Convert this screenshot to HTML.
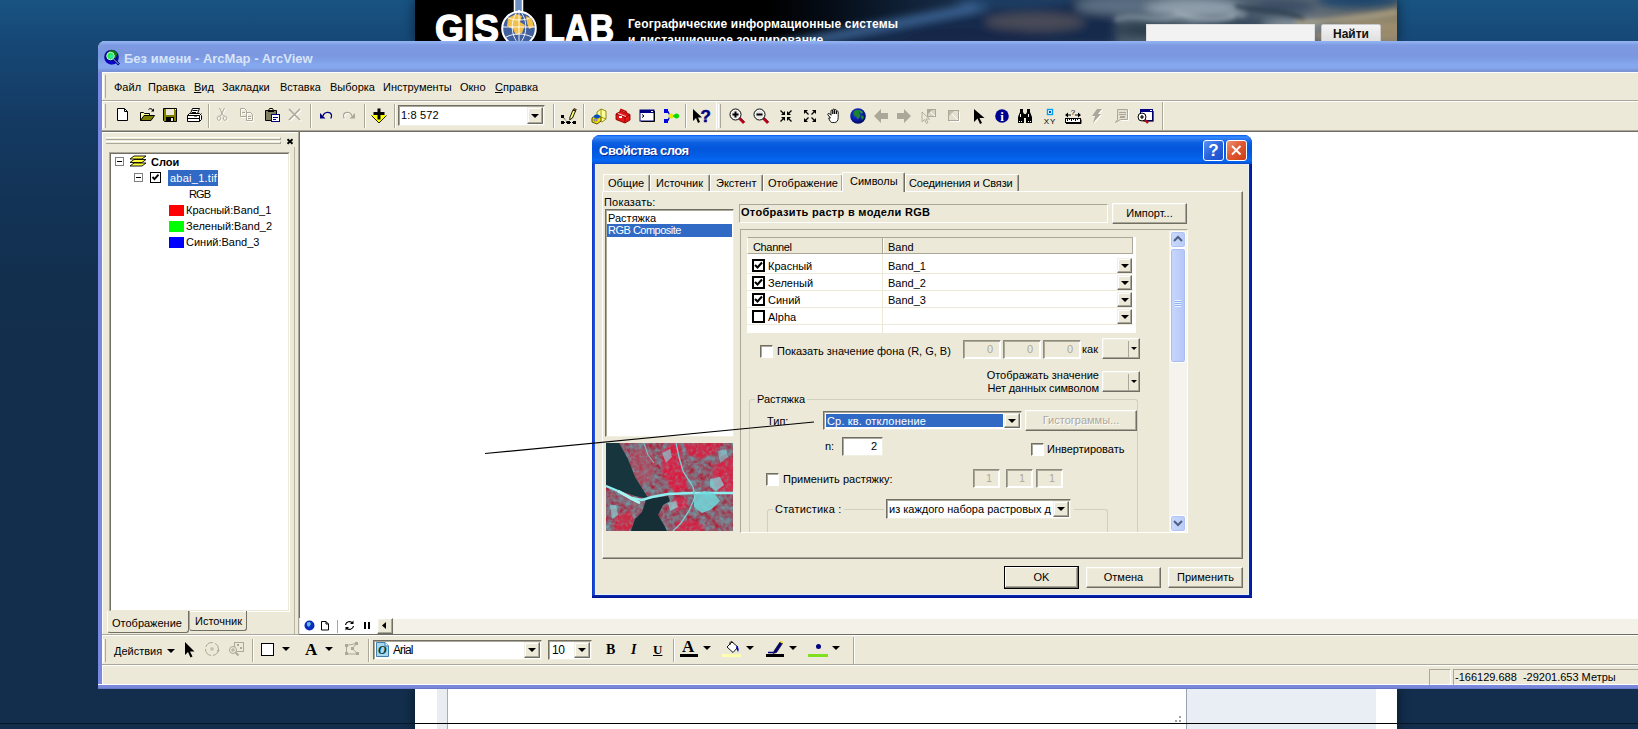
<!DOCTYPE html>
<html lang="ru">
<head>
<meta charset="utf-8">
<title>Свойства слоя</title>
<style>
*{box-sizing:border-box;margin:0;padding:0}
html,body{width:1638px;height:729px;overflow:hidden}
body{position:relative;font-family:"Liberation Sans",sans-serif;font-size:11px;color:#000;
 background:linear-gradient(180deg,#185482 0px,#164876 40px,#143a62 120px,#133356 200px,#122f4e 280px,#122e4c 360px,#122e4c 729px)}
.abs{position:absolute}
.t{position:absolute;white-space:nowrap;line-height:13px;height:13px}
.face{background:#ece9d8}
/* ---------- site header ---------- */
#site{left:415px;top:0;width:982px;height:41px;background:#000;overflow:hidden;box-shadow:0 0 10px 2px rgba(0,0,0,.4)}
#sitebot{left:415px;top:689px;width:982px;height:41px;background:#fff;overflow:hidden;box-shadow:0 0 10px 2px rgba(0,0,0,.4)}
/* ---------- main window ---------- */
#win{left:98px;top:41px;width:1560px;height:648px;background:#ece9d8;border-radius:7px 0 0 0;overflow:hidden}
#wtitle{left:0;top:0;width:1560px;height:31px;background:linear-gradient(180deg,#93b3f2 0,#8cabee 2px,#7d9ae2 4px,#7a97e0 14px,#7f9ee6 19px,#85a7ee 23px,#85a7ee 27px,#7c97dc 29px,#7a90d2 31px)}
#wtitle .cap{left:26px;top:10px;font-weight:bold;font-size:13px;line-height:16px;height:16px;color:#d8e4f8;}
#wl{left:0;top:31px;width:5px;height:617px;background:linear-gradient(90deg,#7a88de 0,#7a88de 4px,#fff 4px)}
#wb{left:0;top:643px;width:1560px;height:5px;background:linear-gradient(180deg,#fff 0,#fff 1px,#7a88de 1px,#7886d8 4px,#5a68b8 5px)}
.sep{position:absolute;width:2px;border-left:1px solid #aca899;border-right:1px solid #fff}
.hline{position:absolute;height:2px;border-top:1px solid #aca899;border-bottom:1px solid #fff}
.grip{position:absolute;width:3px;border-left:1px solid #fff;border-right:1px solid #aca899}
.ico{position:absolute;overflow:visible}
/* classic controls */
.sunken{position:absolute;border:1px solid;border-color:#aca899 #fff #fff #aca899;background:#fff}
.sunken2{position:absolute;border:1px solid;border-color:#716f64 #f1efe2 #f1efe2 #716f64;box-shadow:inset 1px 1px 0 #aca899, inset -1px -1px 0 #fff;background:#fff}
.btn{position:absolute;background:#ece9d8;border:1px solid;border-color:#fff #716f64 #716f64 #fff;box-shadow:inset -1px -1px 0 #aca899, inset 1px 1px 0 #f1efe2;text-align:center;line-height:18px}
.ddb{position:absolute;background:#ece9d8;border:1px solid;border-color:#f1efe2 #716f64 #716f64 #f1efe2;box-shadow:inset -1px -1px 0 #aca899, inset 1px 1px 0 #fff}
.ddb:after{content:"";position:absolute;left:50%;top:50%;margin:-2px 0 0 -4px;border:4px solid transparent;border-top:4px solid #000;border-bottom:0}
.chk{position:absolute;width:13px;height:13px;background:#fff;border:1px solid;border-color:#716f64 #fff #fff #716f64;box-shadow:inset 1px 1px 0 #aca899}
.dis{color:#aca899}

/* dialog */
#dlg{background:linear-gradient(90deg,#0c34c0 0,#2458dc 3px,#1540c8 50%,#0c2cb0 657px,#001494 660px);border-radius:8px 8px 0 0;overflow:hidden}
#dtitle{left:0;top:0;width:660px;height:29px;background:linear-gradient(180deg,#0058ee 0,#3a8cfc 2px,#2a78f0 4px,#0a5fe0 8px,#0356dc 14px,#0460e8 22px,#0668f4 25px,#0558e0 28px,#0447c8 29px)}
#dtitle .dcap{left:7px;top:8px;font-weight:bold;font-size:13px;line-height:16px;height:16px;color:#fff;text-shadow:1px 1px 0 #0a2a90;letter-spacing:-.5px}
.tb{top:5px;width:21px;height:21px;border:1px solid #fff;border-radius:3px;color:#fff;text-align:center}
.tbh{left:611px;background:linear-gradient(135deg,#5a92f4,#2a62dc 50%,#1c4ccc);font:bold 17px/19px "Liberation Sans",sans-serif}
.tbx{left:634px;background:linear-gradient(135deg,#ec9478,#e05a34 45%,#cc3c12)}
.tbx svg{position:absolute;left:-1px;top:-1px}
#dbody{left:3px;top:29px;width:654px;height:431px;background:#ece9d8;border:1px solid #e6f2fc;border-top:0}
#dbot{left:0;top:460px;width:660px;height:3px;background:linear-gradient(180deg,#0c2cb0,#00108c)}
#dlg .btn{font-size:11px}
</style>
</head>
<body>
<!--SITE-->
<div id="site" class="abs">
<svg class="abs" style="left:0;top:0" width="982" height="41" viewBox="0 0 982 41">
<defs>
<linearGradient id="hg" x1="0" x2="1" y1="0" y2="0">
<stop offset="0" stop-color="#000"/><stop offset=".36" stop-color="#000"/><stop offset=".42" stop-color="#050c16"/><stop offset=".50" stop-color="#0f2036"/><stop offset=".58" stop-color="#1c3350"/><stop offset=".66" stop-color="#30445a"/><stop offset=".72" stop-color="#4a5a6a"/><stop offset=".78" stop-color="#5e6e7c"/><stop offset=".84" stop-color="#4a5c6e"/><stop offset=".90" stop-color="#5a6878"/><stop offset=".95" stop-color="#6c7070"/><stop offset="1" stop-color="#8a8068"/>
</linearGradient>
<filter id="bl" x="-20%" y="-50%" width="140%" height="200%"><feGaussianBlur stdDeviation="5"/></filter>
<filter id="bl2" x="-20%" y="-50%" width="140%" height="200%"><feGaussianBlur stdDeviation="2.500"/></filter>
</defs>
<rect width="982" height="41" fill="url(#hg)"/>
<g filter="url(#bl)">
<path d="M360,46L600,0L700,0L700,46z" fill="#122a4c"/>
<path d="M340,50L620,-4" stroke="#4674ac" stroke-width="6" fill="none"/>
<ellipse cx="600" cy="0" rx="60" ry="8" fill="#1a3c64"/>
<ellipse cx="620" cy="22" rx="50" ry="9" fill="#4a4c58"/>
<ellipse cx="560" cy="36" rx="70" ry="8" fill="#14284a"/>
<ellipse cx="700" cy="6" rx="40" ry="8" fill="#5c7084"/>
<ellipse cx="740" cy="30" rx="40" ry="8" fill="#2c3c4e"/>
<ellipse cx="780" cy="8" rx="50" ry="9" fill="#909fac"/>
<ellipse cx="815" cy="24" rx="35" ry="7" fill="#34465a"/>
<ellipse cx="870" cy="6" rx="30" ry="7" fill="#3a4e64"/>
<ellipse cx="880" cy="26" rx="30" ry="6" fill="#8c98a0"/>
<ellipse cx="945" cy="0" rx="45" ry="9" fill="#1c446c"/>
<ellipse cx="955" cy="30" rx="40" ry="10" fill="#a09070"/>
</g>
<g filter="url(#bl2)">
<path d="M700,20c20,-8 40,4 60,-4s40,-10 70,0" stroke="#8c9ca8" stroke-width="3" fill="none"/>
<path d="M760,12c20,8 40,10 60,4" stroke="#a4b2bc" stroke-width="3" fill="none"/>
<path d="M820,6c20,6 50,2 70,14" stroke="#283a4c" stroke-width="4" fill="none"/>
<path d="M880,24c20,-4 50,-2 102,-12" stroke="#b0a484" stroke-width="4" fill="none"/>
<path d="M900,36c20,-2 50,-2 82,-6" stroke="#98886c" stroke-width="5" fill="none"/>
</g>
</svg>
<svg class="abs" style="left:0;top:0" width="230" height="41" viewBox="0 0 230 41">
<text x="20" y="42" font-family="Liberation Sans,sans-serif" font-weight="bold" font-size="38" fill="#fff" stroke="#fff" stroke-width="1.300" textLength="64" lengthAdjust="spacingAndGlyphs">GIS</text>
<text x="129" y="42" font-family="Liberation Sans,sans-serif" font-weight="bold" font-size="38" fill="#fff" stroke="#fff" stroke-width="1.300" textLength="70" lengthAdjust="spacingAndGlyphs">LAB</text>
<rect x="99.500" y="-2" width="8" height="14" fill="#6f8fc0" stroke="#fff" stroke-width="1.500"/>
<circle cx="104" cy="28.500" r="16.800" fill="#3f5f9e" stroke="#fff" stroke-width="2"/>
<path d="M93,18l8,-4l6,2l-2,6l5,3l-3,8l-6,2l-3,-6l-6,-3z" fill="#f2c04a"/><path d="M111,16l6,3l2,8l-5,2l-2,-6z" fill="#f2c04a"/>
<path d="M104,10v34M87,27h34M91,17c8,4 18,4 26,0M91,37c8,-4 18,-4 26,0M104,10c-9,8 -9,26 0,34M104,10c9,8 9,26 0,34" stroke="#fff" stroke-width="1" fill="none" opacity=".9"/>
</svg>
<div class="t" style="left:213px;top:17px;color:#fff;font-weight:bold;font-size:12px;line-height:14px;height:14px;letter-spacing:.15px">Географические информационные системы</div>
<div class="t" style="left:213px;top:33px;color:#fff;font-weight:bold;font-size:12px;line-height:14px;height:14px;letter-spacing:.15px">и дистанционное зондирование</div>
<div class="abs" style="left:731px;top:24px;width:169px;height:20px;background:#f2f2f2;border:1px solid #ddd"></div>
<div class="abs" style="left:906px;top:24px;width:60px;height:20px;background:linear-gradient(180deg,#f4f4f4,#dcdcdc);border:1px solid #c8c8c8;border-radius:2px;text-align:center;font-weight:bold;font-size:12px;line-height:19px;color:#111">Найти</div>

</div>
<div id="sitebot" class="abs">
<div class="abs" style="left:22px;top:0;width:11px;height:41px;background:#e9edf1;border-right:1px solid #a4acbc"></div>
<div class="abs" style="left:771px;top:0;width:190px;height:41px;background:#e9eef4;border-left:1px solid #9aa2b4"></div>
<svg class="abs" style="left:758px;top:26px" width="10" height="10" viewBox="0 0 10 10"><g fill="#a0a0a0"><rect x="6" y="1" width="2" height="2"/><rect x="2" y="5" width="2" height="2"/><rect x="6" y="5" width="2" height="2"/></g></svg>

</div>
<div class="abs" style="left:0;top:723px;width:1638px;height:1px;background:#0a1626"></div><div class="abs" style="left:415px;top:723px;width:982px;height:1px;background:#000"></div>
<!--WIN-->
<div id="win" class="abs">
 <div id="wtitle" class="abs"><svg class="abs" style="left:6px;top:8px" width="17" height="17" viewBox="0 0 17 17"><circle cx="7.500" cy="8" r="7.300" fill="#0a0a90"/><path d="M5,1.500c3,-1.500 7,0 8.500,3l-2,5l-5,-1l-2,-4z" fill="#0c7818"/><path d="M.8,9c2,2.500 6,3.500 9,2.500l2,3c-4,2.500 -10,.5 -11,-5.500z" fill="#0808c8"/><circle cx="6.500" cy="7" r="3.800" fill="#20f040" stroke="#dce8f0" stroke-width="1"/><circle cx="7.200" cy="7.600" r="2" fill="#30e8a0"/><path d="M9.500,10l5.500,5.500" stroke="#000080" stroke-width="2.600"/><path d="M9.500,10l5,5" stroke="#b8dcff" stroke-width=".9"/></svg><div class="t cap">Без имени - ArcMap - ArcView</div></div>
 <div id="wl" class="abs"></div>
 <div id="wb" class="abs"></div>
<div class="abs" style="left:4px;top:31px;width:1556px;height:1px;background:#fff"></div>
<div class="hline" style="left:4px;top:59px;width:1556px"></div>
<div class="grip" style="left:5px;top:34px;height:23px"></div>
<div class="t" style="left:16px;top:40px;">Файл</div>
<div class="t" style="left:50px;top:40px;">Правка</div>
<div class="t" style="left:96px;top:40px;"><u>В</u>ид</div>
<div class="t" style="left:124px;top:40px;">Закладки</div>
<div class="t" style="left:182px;top:40px;">Вставка</div>
<div class="t" style="left:232px;top:40px;">Выборка</div>
<div class="t" style="left:285px;top:40px;">Инструменты</div>
<div class="t" style="left:362px;top:40px;">Окно</div>
<div class="t" style="left:397px;top:40px;"><u>С</u>правка</div>

<div class="abs" style="left:4px;top:89px;width:1556px;height:3px;background:linear-gradient(180deg,#aca899 0,#aca899 1px,#716f64 1px,#716f64 2px,#fff 2px)"></div>
<div class="grip" style="left:5px;top:63px;height:24px"></div>
<svg class="ico" style="left:17px;top:66px" width="16" height="16" viewBox="0 0 16 16"><path d="M2.5,1.5h7l3,3v9h-10z" fill="#fff" stroke="#000"/><path d="M9.5,1.5v3h3" fill="none" stroke="#000"/></svg>
<svg class="ico" style="left:41px;top:66px" width="16" height="16" viewBox="0 0 16 16"><path d="M1.5,13.5v-8h3l1,1h5v2" fill="#ffff99" stroke="#000"/><path d="M1.5,13.5l3.5,-5h10.5l-3.5,5z" fill="#808000" stroke="#000"/><path d="M9.5,2.5c1.5,-1.5 3.5,-1 4.5,1" fill="none" stroke="#000"/><path d="M12,4.5h3v-3z" fill="#000"/></svg>
<svg class="ico" style="left:64px;top:66px" width="16" height="16" viewBox="0 0 16 16"><path d="M1.5,1.5h13v13h-12l-1,-1z" fill="#808000" stroke="#000"/><rect x="4" y="2" width="8" height="6" fill="#ece9d8"/><rect x="13" y="2" width="1" height="1" fill="#fff"/><rect x="4" y="10" width="8" height="4" fill="#000"/><rect x="9" y="11" width="2" height="3" fill="#ece9d8"/></svg>
<svg class="ico" style="left:88px;top:66px" width="16" height="16" viewBox="0 0 16 16"><path d="M4.5,6.5l2,-5h7l-2,5z" fill="#fff" stroke="#000"/><path d="M6.5,3.5h5M6,5.5h4" stroke="#000" fill="none"/><path d="M1.5,8.5l2,-2h10l2,2v4l-2,2h-12z" fill="#fff" stroke="#000"/><path d="M1.5,8.5h12l2,-2M13.5,8.5v6M1.5,11.5h12" fill="none" stroke="#000"/><rect x="8" y="9" width="3" height="1" fill="#808080"/></svg>
<div class="sep" style="left:110px;top:63px;height:24px"></div>
<svg class="ico" style="left:116px;top:66px" width="16" height="16" viewBox="0 0 16 16"><path d="M5.500,1l4,8M10.500,1l-4,8M5,9a1.700,2.200 0 1 0 0.100,0zM11,9a1.700,2.200 0 1 0 0.100,0z" fill="none" stroke="#fff" stroke-width="1" transform="translate(1,1)"/><path d="M5.500,1l4,8M10.500,1l-4,8M5,9a1.700,2.200 0 1 0 0.100,0zM11,9a1.700,2.200 0 1 0 0.100,0z" fill="none" stroke="#aca899" stroke-width="1"/></svg>
<svg class="ico" style="left:141px;top:66px" width="16" height="16" viewBox="0 0 16 16"><path d="M1.5,1.5h4l2,2v6h-6zM7.5,5.5h4l2,2v6h-6zM9,9.5h3M9,11.5h3M3,5.5h3" fill="none" stroke="#fff" stroke-width="1" transform="translate(1,1)"/><path d="M1.5,1.5h4l2,2v6h-6zM7.5,5.5h4l2,2v6h-6zM9,9.5h3M9,11.5h3M3,5.5h3" fill="none" stroke="#aca899" stroke-width="1"/></svg>
<svg class="ico" style="left:166px;top:66px" width="16" height="16" viewBox="0 0 16 16"><path d="M1.5,3.5h11v10h-11z" fill="#808060" stroke="#000"/><path d="M4.5,3.5l1,-2h3l1,2z" fill="#ffff99" stroke="#000"/><rect x="4" y="4" width="6" height="1" fill="#000"/><rect x="7.5" y="7.5" width="8" height="7" fill="#fff" stroke="#000080"/><path d="M9,10.5h5M9,12.5h3" stroke="#000080"/></svg>
<svg class="ico" style="left:189px;top:66px" width="16" height="16" viewBox="0 0 16 16"><path d="M2,2l11,11M13,2l-11,11" fill="none" stroke="#fff" stroke-width="1.6" transform="translate(1,1)"/><path d="M2,2l11,11M13,2l-11,11" fill="none" stroke="#aca899" stroke-width="1.6"/></svg>
<div class="sep" style="left:212px;top:63px;height:24px"></div>
<svg class="ico" style="left:220px;top:66px" width="16" height="16" viewBox="0 0 16 16"><path d="M5,9c1,-4.500 7.500,-5 8.500,-1c.3,1.500 -.2,2.500 -.8,3.500" fill="none" stroke="#000080" stroke-width="1.200"/><path d="M2,6v5.500h5.500z" fill="#000080"/></svg>
<svg class="ico" style="left:243px;top:66px" width="16" height="16" viewBox="0 0 16 16"><g transform="translate(16,0) scale(-1,1)"><path d="M5,9c1,-4.500 7.500,-5 8.500,-1c.3,1.500 -.2,2.500 -.8,3.500" fill="none" stroke="#fff" stroke-width="1.200" transform="translate(-1,1)"/><path d="M5,9c1,-4.500 7.500,-5 8.500,-1c.3,1.500 -.2,2.500 -.8,3.500" fill="none" stroke="#aca899" stroke-width="1.200"/><path d="M2,6v5.500h5.500z" fill="#aca899"/></g></svg>
<div class="sep" style="left:266px;top:63px;height:24px"></div>
<svg class="ico" style="left:273px;top:67px" width="16" height="16" viewBox="0 0 16 16"><path d="M.5,7h15l-7.500,8z" fill="#ffff00"/><path d="M.5,7.500l7.500,7.500l7.500,-7.500" fill="none" stroke="#000" stroke-width=".9"/><path d="M8,.5v11M2.500,5.500h11" stroke="#000" stroke-width="3" fill="none"/></svg>
<div class="sep" style="left:296px;top:63px;height:24px"></div>
<div class="sunken2" style="left:300px;top:64px;width:147px;height:21px"></div>
<div class="t" style="left:303px;top:68px;letter-spacing:.15px">1:8 572</div>
<div class="ddb" style="left:429px;top:66px;width:16px;height:17px"></div>
<div class="sep" style="left:455px;top:63px;height:24px"></div>
<svg class="ico" style="left:463px;top:67px" width="16" height="16" viewBox="0 0 16 16"><path d="M9,9l3,-7l2.500,1l-3,7l-2.800,1.800z" fill="#ffff66" stroke="#000" stroke-width=".9"/><path d="M12,2l1,-1.500l2.400,1l-0.900,1.500z" fill="#a05020" stroke="#000" stroke-width=".6"/><path d="M1.500,8.500l5,6M1,14.500h13" stroke="#000" fill="none" stroke-dasharray="1,1"/><rect x="0" y="7" width="3" height="3" fill="#000"/><rect x="0" y="13" width="3" height="3" fill="#000"/><rect x="6" y="13" width="3" height="3" fill="#000"/><rect x="12" y="13" width="3" height="3" fill="#000"/></svg>
<div class="sep" style="left:485px;top:63px;height:24px"></div>
<svg class="ico" style="left:493px;top:67px" width="16" height="16" viewBox="0 0 16 16"><path d="M6,4l4,-3l5,2v8l-4,3l-5,-2z" fill="#ffff99" stroke="#808000" stroke-width=".9"/><path d="M10,1v8l-4,3M10,9l5,2" fill="none" stroke="#808000" stroke-width=".8"/><path d="M1,10l4,-3l5,2v4l-4,3l-5,-2z" fill="#ffe000" stroke="#404000" stroke-width=".9"/><ellipse cx="6" cy="8.500" rx="3" ry="2" fill="#0050c8"/><rect x="3" y="11" width="3" height="2" fill="#c0c0ff" stroke="#404040" stroke-width=".5"/></svg>
<svg class="ico" style="left:517px;top:67px" width="16" height="16" viewBox="0 0 16 16"><path d="M1,6l5,-3l9,3.500v5.500l-5,3l-9,-3.500z" fill="#e01818" stroke="#900000" stroke-width=".9"/><path d="M1,6l9,3.500l5,-3M10,9.500v5.500" fill="none" stroke="#900000" stroke-width=".8"/><path d="M5,3.500l1,-2l5,2l1,2" fill="none" stroke="#c00000" stroke-width="1.400"/><rect x="4" y="8" width="3" height="2" fill="#fff"/><path d="M3,5.500l8,3" stroke="#fff" stroke-width=".8"/></svg>
<svg class="ico" style="left:541px;top:67px" width="16" height="16" viewBox="0 0 16 16"><rect x="1" y="2" width="14" height="11" fill="#fff" stroke="#000080" stroke-width="1"/><rect x="1" y="2" width="14" height="3" fill="#000080"/><rect x="12" y="3" width="2" height="1" fill="#fff"/><path d="M3,6.500l2,1.500l-2,1.500" stroke="#000" fill="none"/><path d="M15.500,3v10.500h-13.500" stroke="#000" fill="none"/></svg>
<svg class="ico" style="left:565px;top:67px" width="16" height="16" viewBox="0 0 16 16"><path d="M3,3.500h2l2,4.500l-2,4.500h-2M7,8h7" stroke="#0000c0" fill="none" stroke-width="1.200"/><rect x="1" y="1" width="4" height="4" fill="#0000e0"/><rect x="1" y="11" width="4" height="4" fill="#0000e0"/><circle cx="8" cy="8" r="2.400" fill="#e8e800"/><circle cx="13.500" cy="8" r="2.500" fill="#00e000"/></svg>
<div class="sep" style="left:587px;top:63px;height:24px"></div>
<svg class="ico" style="left:595px;top:67px" width="16" height="16" viewBox="0 0 16 16"><path d="M0,1v12l3,-3l2,5l2,-1l-2,-4.500h4z" fill="#000"/><text x="7.500" y="13.500" font-family="Liberation Sans,sans-serif" font-weight="bold" font-size="17" fill="#000080" stroke="#000080" stroke-width=".5">?</text></svg>
<div class="abs" style="left:618px;top:61px;width:1px;height:28px;background:#fff"></div>
<div class="grip" style="left:620px;top:63px;height:24px"></div>
<svg class="ico" style="left:631px;top:67px" width="16" height="16" viewBox="0 0 16 16"><path d="M10,10l5,5" stroke="#c00020" stroke-width="2.600"/><path d="M10,10l5,5" stroke="#600010" stroke-width="1" transform="translate(.8,-.8)"/><circle cx="6.500" cy="6.500" r="5.500" fill="#e4e4e4" stroke="#000" stroke-width="1"/><circle cx="6.500" cy="6.500" r="4.300" fill="none" stroke="#fff" stroke-width=".8"/><path d="M3.500,6.500h6" stroke="#000" stroke-width="2"/><path d="M6.500,3.500v6" stroke="#000" stroke-width="2"/></svg>
<svg class="ico" style="left:655px;top:67px" width="16" height="16" viewBox="0 0 16 16"><path d="M10,10l5,5" stroke="#c00020" stroke-width="2.600"/><path d="M10,10l5,5" stroke="#600010" stroke-width="1" transform="translate(.8,-.8)"/><circle cx="6.500" cy="6.500" r="5.500" fill="#e4e4e4" stroke="#000" stroke-width="1"/><circle cx="6.500" cy="6.500" r="4.300" fill="none" stroke="#fff" stroke-width=".8"/><path d="M3.500,6.500h6" stroke="#000" stroke-width="2"/></svg>
<svg class="ico" style="left:680px;top:67px" width="16" height="16" viewBox="0 0 16 16"><g transform="translate(8,8) scale(-1,-1) translate(-7,-7)"><path d="M1.500,1.500l3,3" stroke="#000" stroke-width="1.300" fill="none"/><path d="M6,2v4h-4z" fill="#000"/></g><g transform="translate(8,8) scale(1,-1) translate(-7,-7)"><path d="M1.500,1.500l3,3" stroke="#000" stroke-width="1.300" fill="none"/><path d="M6,2v4h-4z" fill="#000"/></g><g transform="translate(8,8) scale(-1,1) translate(-7,-7)"><path d="M1.500,1.500l3,3" stroke="#000" stroke-width="1.300" fill="none"/><path d="M6,2v4h-4z" fill="#000"/></g><g transform="translate(8,8) scale(1,1) translate(-7,-7)"><path d="M1.500,1.500l3,3" stroke="#000" stroke-width="1.300" fill="none"/><path d="M6,2v4h-4z" fill="#000"/></g></svg>
<svg class="ico" style="left:704px;top:67px" width="16" height="16" viewBox="0 0 16 16"><g transform="translate(8,8) scale(-1,-1) translate(-7,-7)"><path d="M2.500,2.500l3,3" stroke="#000" stroke-width="1.300" fill="none"/><path d="M1,5v-4h4z" fill="#000"/></g><g transform="translate(8,8) scale(1,-1) translate(-7,-7)"><path d="M2.500,2.500l3,3" stroke="#000" stroke-width="1.300" fill="none"/><path d="M1,5v-4h4z" fill="#000"/></g><g transform="translate(8,8) scale(-1,1) translate(-7,-7)"><path d="M2.500,2.500l3,3" stroke="#000" stroke-width="1.300" fill="none"/><path d="M1,5v-4h4z" fill="#000"/></g><g transform="translate(8,8) scale(1,1) translate(-7,-7)"><path d="M2.500,2.500l3,3" stroke="#000" stroke-width="1.300" fill="none"/><path d="M1,5v-4h4z" fill="#000"/></g></svg>
<svg class="ico" style="left:728px;top:67px" width="16" height="16" viewBox="0 0 16 16"><path d="M4.500,10l-2.500,-3c-.8,-1.200 .8,-2.200 1.700,-1.200l1.300,1.500v-4.300c0,-1.300 1.800,-1.300 1.800,0v3v-4c0,-1.300 1.800,-1.300 1.800,0v4v-3.500c0,-1.300 1.800,-1.300 1.800,0v3.500v-2c0,-1.300 1.800,-1.300 1.800,0v5.500c0,3 -1.500,5 -3.500,5h-2.500c-1.500,0 -2.500,-1.500 -3.500,-4.500z" fill="#fff" stroke="#000" stroke-width=".9" stroke-linejoin="round"/></svg>
<svg class="ico" style="left:752px;top:67px" width="16" height="16" viewBox="0 0 16 16"><defs><radialGradient id="gg" cx=".4" cy=".35" r=".7"><stop offset="0" stop-color="#2040d8"/><stop offset=".6" stop-color="#0a1ca0"/><stop offset="1" stop-color="#000850"/></radialGradient></defs><circle cx="8" cy="8" r="7.800" fill="url(#gg)"/><path d="M4,3c2,-1.500 5,-1.500 6,0l-1,2l1.500,1.500l-1,3l-2,2l-1,-2.500l-2,-1l-1,-2.500z" fill="#1c8430"/><path d="M10.500,8l2.500,-0.500l1,2l-2,2.500z" fill="#1c8430"/><path d="M9,2l3,1l1,2l-2,.5z" fill="#2a9a3a"/></svg>
<svg class="ico" style="left:775px;top:67px" width="16" height="16" viewBox="0 0 16 16"><path d="M1,8l7,-7v4h7v6h-7v4z" fill="#aca899"/></svg>
<svg class="ico" style="left:798px;top:67px" width="16" height="16" viewBox="0 0 16 16"><path d="M15,8l-7,-7v4h-7v6h7v4z" fill="#aca899"/></svg>
<svg class="ico" style="left:822px;top:67px" width="16" height="16" viewBox="0 0 16 16"><rect x="7.500" y="1.500" width="8" height="7" fill="#d8d4c4" stroke="#aca899"/><path d="M8,2l7,6" stroke="#fff"/><path d="M8,2h4l-4,4z" fill="#aca899"/><path d="M2,4v10l2.500,-2.500l2,4l1.500,-1l-2,-3.500h3.500z" fill="#ece9d8" stroke="#aca899" stroke-width=".9"/></svg>
<svg class="ico" style="left:847px;top:67px" width="16" height="16" viewBox="0 0 16 16"><rect x="3.500" y="2.500" width="10" height="10" fill="#e4e0d0" stroke="#aca899"/><path d="M4,3l9,9" stroke="#fff"/><path d="M4,3h5l-5,5z" fill="#aca899" opacity=".7"/><path d="M13.500,3v9.500h-9.500" stroke="#fff" fill="none" transform="translate(1,1)"/></svg>
<svg class="ico" style="left:873px;top:67px" width="16" height="16" viewBox="0 0 16 16"><path d="M3,1v13l3.500,-3.500l2.500,5.500l2,-1l-2.500,-5h5z" fill="#000"/></svg>
<svg class="ico" style="left:896px;top:67px" width="16" height="16" viewBox="0 0 16 16"><circle cx="8" cy="8" r="6.800" fill="#000090"/><text x="8" y="12.500" text-anchor="middle" font-family="Liberation Serif,serif" font-weight="bold" font-size="13" fill="#fff">i</text></svg>
<svg class="ico" style="left:919px;top:67px" width="16" height="16" viewBox="0 0 16 16"><path d="M1,15v-6l2,-5v-3h3v3l1,2h2l1,-2v-3h3v3l2,5v6h-6v-5h-2v5z" fill="#000"/><rect x="2" y="13" width="1" height="1" fill="#fff"/><rect x="4" y="13" width="1" height="1" fill="#fff"/><rect x="11" y="13" width="1" height="1" fill="#fff"/><rect x="13" y="13" width="1" height="1" fill="#fff"/><rect x="3" y="6" width="1" height="3" fill="#fff"/><rect x="11" y="6" width="1" height="3" fill="#fff"/></svg>
<svg class="ico" style="left:944px;top:67px" width="16" height="16" viewBox="0 0 16 16"><rect x="5.500" y="1.500" width="5" height="5" fill="#fff" stroke="#00a0f0" stroke-width="1.400"/><rect x="7" y="3" width="2" height="2" fill="#0050c0"/><text x="8" y="15.500" text-anchor="middle" font-family="Liberation Sans,sans-serif" font-size="8" letter-spacing="1" fill="#000">XY</text></svg>
<svg class="ico" style="left:967px;top:67px" width="16" height="16" viewBox="0 0 16 16"><text x="8" y="6.500" text-anchor="middle" font-family="Liberation Sans,sans-serif" font-size="8" fill="#000">?</text><path d="M1,7h5M10,7h5" stroke="#000" fill="none"/><path d="M0,7l3,-2.500v5zM16,7l-3,-2.500v5z" fill="#000"/><rect x=".5" y="10.500" width="15" height="4" fill="#fff" stroke="#000"/><path d="M2.500,11v2M4.500,11v1M6.500,11v2M8.500,11v1M10.500,11v2M12.500,11v1" stroke="#000"/><path d="M1,15.500h15v-4" stroke="#000" fill="none"/></svg>
<svg class="ico" style="left:991px;top:67px" width="16" height="16" viewBox="0 0 16 16"><path d="M8,1h5l-4,5h3l-8,9l2,-7h-3z" fill="#fff" transform="translate(1,1)"/><path d="M8,1h5l-4,5h3l-8,9l2,-7h-3z" fill="#aca899"/></svg>
<svg class="ico" style="left:1015px;top:67px" width="16" height="16" viewBox="0 0 16 16"><path d="M4.500,1.500h10v10h-7l-5,3l2,-3z" fill="#e4e0d0" stroke="#aca899"/><path d="M6,4.500h7M6,6.500h7" stroke="#aca899"/><rect x="7" y="8" width="5" height="2" fill="#aca899"/><path d="M15.500,2v10.500h-7" stroke="#fff" fill="none"/></svg>
<svg class="ico" style="left:1039px;top:67px" width="16" height="16" viewBox="0 0 16 16"><rect x="3.500" y="1.500" width="12" height="11" fill="#fff" stroke="#000080"/><rect x="3" y="1" width="13" height="3" fill="#000080"/><rect x="13" y="2" width="2" height="1" fill="#fff"/><path d="M16.300,3v10.300h-10" stroke="#000" fill="none" stroke-width=".8"/><path d="M7,11l4,4" stroke="#c00020" stroke-width="2.400"/><circle cx="5" cy="9" r="4" fill="#fff" stroke="#000" stroke-width="1"/><path d="M3,9h4M5,7v4" stroke="#000" stroke-width="1.200"/></svg>
<div class="sep" style="left:1064px;top:61px;height:28px"></div>

<div class="abs" style="left:8px;top:96px;width:175px;height:3px;border-top:1px solid #fff;border-bottom:1px solid #aca899;border-right:1px solid #aca899"></div>
<div class="abs" style="left:8px;top:100px;width:175px;height:3px;border-top:1px solid #fff;border-bottom:1px solid #aca899;border-right:1px solid #aca899"></div>
<svg class="abs" style="left:188px;top:97px" width="8" height="7" viewBox="0 0 8 7"><path d="M1.500,1.200l5,4.600M6.500,1.200l-5,4.600" stroke="#000" stroke-width="1.900"/></svg>
<div class="abs" style="left:11px;top:111px;width:181px;height:460px;border:1px solid;border-color:#aca899 #fff #fff #aca899"><div style="width:179px;height:458px;border:1px solid;border-color:#716f64 #ece9d8 #ece9d8 #716f64;background:#fff"></div></div>
<div class="abs" style="left:196px;top:106px;width:1px;height:488px;background:#b8b5a4"></div>
<div class="abs" style="left:200px;top:91px;width:1px;height:504px;background:#aca899"></div>
<div class="abs" style="left:17px;top:116px;width:9px;height:9px;border:1px solid #808080;background:#fff"><div style="position:absolute;left:1px;top:3px;width:5px;height:1px;background:#000"></div></div>
<div class="abs" style="left:36px;top:132px;width:9px;height:9px;border:1px solid #808080;background:#fff"><div style="position:absolute;left:1px;top:3px;width:5px;height:1px;background:#000"></div></div>
<svg class="ico" style="left:31px;top:113px" width="18" height="16" viewBox="0 0 18 16"><g fill="#ffff40" stroke="#000" stroke-width=".9"><path d="M1,12l4,-3h12l-4,3z"/><path d="M1,8.500l4,-3h12l-4,3z"/><path d="M1,5l4,-3h12l-4,3z"/></g></svg>
<div class="t" style="left:53px;top:115px;font-weight:bold">Слои</div>
<div class="abs" style="left:52px;top:131px;width:11px;height:11px;border:1px solid #000;background:#fff"><svg width="9" height="9" viewBox="0 0 9 9" style="position:absolute;left:0;top:0"><path d="M1.500,4l2,2.200l4,-4.500" stroke="#000" stroke-width="1.900" fill="none"/></svg></div>
<div class="abs" style="left:70px;top:129px;width:50px;height:16px;background:#316ac5"></div>
<div class="t" style="left:72px;top:131px;color:#fff;letter-spacing:.25px">abai_1.tif</div>
<div class="t" style="left:91px;top:147px;letter-spacing:-.9px">RGB</div>
<div class="abs" style="left:71px;top:164px;width:15px;height:11px;background:#f00"></div>
<div class="t" style="left:88px;top:163px;">Красный:Band_1</div>
<div class="abs" style="left:71px;top:180px;width:15px;height:11px;background:#0f0"></div>
<div class="t" style="left:88px;top:179px;">Зеленый:Band_2</div>
<div class="abs" style="left:71px;top:196px;width:15px;height:11px;background:#00f"></div>
<div class="t" style="left:88px;top:195px;">Синий:Band_3</div>
<div class="abs" style="left:4px;top:593px;width:197px;height:2px;background:#aca899;border-bottom:1px solid #fff"></div>
<div class="abs" style="left:91px;top:570px;width:58px;height:20px;border:1px solid #716f64;border-top:0;border-left-color:#aca899;border-radius:0 0 3px 3px"></div>
<div class="t" style="left:97px;top:574px;">Источник</div>
<div class="abs" style="left:9px;top:570px;width:82px;height:22px;border:1px solid #716f64;border-top:0;border-left-color:#fff;border-radius:0 0 3px 3px;background:#ece9d8"></div>
<div class="t" style="left:14px;top:576px;">Отображение</div>

<div class="abs" style="left:201px;top:91px;width:1400px;height:486px;background:#fff;border-left:1px solid #716f64"></div>
<div class="abs" style="left:202px;top:577px;width:77px;height:16px;background:#fff"></div>
<div class="abs" style="left:279px;top:577px;width:1400px;height:16px;background:#f3f1e8;border-top:1px solid #fff"></div>
<div class="abs" style="left:201px;top:593px;width:1400px;height:2px;background:#716f64;border-bottom:1px solid #fff"></div>
<div class="btn" style="left:279px;top:577px;width:16px;height:16px"><svg width="14" height="14" viewBox="0 0 14 14" style="position:absolute;left:0;top:0"><path d="M8,3v7l-4,-3.500z" fill="#000"/></svg></div>
<svg class="ico" style="left:206px;top:579px" width="11" height="11" viewBox="0 0 11 11"><circle cx="5.500" cy="5.500" r="5" fill="#0a2cc0"/><path d="M3,2.500l3,-.5l1,2l-2,3l-2,-1.500z" fill="#60c0e0"/></svg>
<svg class="ico" style="left:222px;top:579px" width="10" height="11" viewBox="0 0 10 11"><path d="M1.500,1.500h4.500l2.500,2.500v6h-7z" fill="#fff" stroke="#000"/><path d="M6,1.500v2.500h2.500" stroke="#000" fill="none"/></svg>
<div class="abs" style="left:239px;top:579px;width:1px;height:13px;background:#aca899"></div>
<svg class="ico" style="left:246px;top:579px" width="11" height="11" viewBox="0 0 11 11"><path d="M1.500,5a4,4 0 0 1 7,-2M9.500,6a4,4 0 0 1 -7,2" stroke="#000" stroke-width="1.200" fill="none"/><path d="M9.500,0.500v3.500h-3.500zM1.500,10.500v-3.500h3.500z" fill="#000"/></svg>
<div class="abs" style="left:266px;top:581px;width:2px;height:7px;background:#000"></div><div class="abs" style="left:270px;top:581px;width:2px;height:7px;background:#000"></div>

<div class="grip" style="left:5px;top:598px;height:23px"></div>
<div class="t" style="left:16px;top:604px;">Действия</div>
<div class="abs" style="left:69px;top:608px;border:4px solid transparent;border-top:4px solid #000;border-bottom:0;width:0;height:0"></div>
<svg class="ico" style="left:85px;top:601px" width="16" height="16" viewBox="0 0 16 16"><path d="M2,0v13l3,-3l2.500,5.500l2,-1l-2.500,-5h4.500z" fill="#000"/></svg>
<svg class="ico" style="left:106px;top:600px" width="16" height="16" viewBox="0 0 16 16"><circle cx="8" cy="8" r="6.500" fill="none" stroke="#aca899" stroke-dasharray="9,2"/><rect x="7" y="7" width="2" height="2" fill="none" stroke="#aca899" stroke-width=".8"/><path d="M13,9l2.500,0l-1.200,2.500z" fill="#aca899"/></svg>
<svg class="ico" style="left:130px;top:600px" width="16" height="16" viewBox="0 0 16 16"><rect x="6.500" y="1.500" width="9" height="9" fill="none" stroke="#aca899"/><rect x="9" y="3" width="2" height="2" fill="#aca899"/><rect x="12" y="6" width="2" height="2" fill="#aca899"/><circle cx="5" cy="9" r="3.500" fill="#ece9d8" stroke="#aca899"/><path d="M3,9h4M5,7v4" stroke="#aca899"/><path d="M7.500,11.500l3,3" stroke="#aca899" stroke-width="1.800"/></svg>
<div class="sep" style="left:154px;top:598px;height:23px"></div>
<div class="abs" style="left:163px;top:602px;width:13px;height:13px;border:1px solid #000;background:#fff"></div>
<div class="abs" style="left:184px;top:606px;border:4px solid transparent;border-top:4px solid #000;border-bottom:0;width:0;height:0"></div>
<div class="t" style="left:207px;top:600px;font-family:'Liberation Serif',serif;font-weight:bold;font-size:17px;line-height:18px;height:18px">A</div>
<div class="abs" style="left:227px;top:606px;border:4px solid transparent;border-top:4px solid #000;border-bottom:0;width:0;height:0"></div>
<svg class="ico" style="left:246px;top:600px" width="16" height="16" viewBox="0 0 16 16"><path d="M2.500,4.500l10,-2l-4,5l5,5.500h-11z" fill="none" stroke="#aca899"/><g fill="#aca899"><rect x="1" y="3" width="3" height="3"/><rect x="11" y="1" width="3" height="3"/><rect x="7" y="6" width="3" height="3"/><rect x="12" y="11" width="3" height="3"/><rect x="1" y="11" width="3" height="3"/></g></svg>
<div class="sep" style="left:270px;top:598px;height:23px"></div>
<div class="sunken2" style="left:275px;top:599px;width:169px;height:20px"></div>
<svg class="ico" style="left:278px;top:601px" width="13" height="15" viewBox="0 0 13 15"><path d="M.5,.5h8.500l3.500,3.500v10.500h-12z" fill="#a8d8f0" stroke="#4080b0"/><path d="M9,.5v3.500h3.500" fill="#e0f0ff" stroke="#4080b0"/><text x="2" y="12" font-family="Liberation Serif,serif" font-style="italic" font-weight="bold" font-size="12" fill="#003830">O</text></svg>
<div class="t" style="left:295px;top:602px;font-size:12px;line-height:14px;height:14px;letter-spacing:-.9px">Arial</div>
<div class="ddb" style="left:426px;top:601px;width:16px;height:16px"></div>
<div class="sunken2" style="left:450px;top:599px;width:44px;height:20px"></div>
<div class="t" style="left:454px;top:602px;font-size:12px;line-height:14px;height:14px;letter-spacing:-.5px">10</div>
<div class="ddb" style="left:476px;top:601px;width:16px;height:16px"></div>
<div class="t" style="left:508px;top:601px;font-family:'Liberation Serif',serif;font-weight:bold;font-size:14px;line-height:16px;height:16px">B</div>
<div class="t" style="left:533px;top:601px;font-family:'Liberation Serif',serif;font-weight:bold;font-style:italic;font-size:14px;line-height:16px;height:16px">I</div>
<div class="t" style="left:555px;top:601px;font-family:'Liberation Serif',serif;font-weight:bold;font-size:13px;line-height:16px;height:16px;text-decoration:underline">U</div>
<div class="sep" style="left:575px;top:598px;height:23px"></div>
<div class="t" style="left:584px;top:597px;font-family:'Liberation Serif',serif;font-weight:bold;font-size:17px;line-height:18px;height:18px">A</div>
<div class="abs" style="left:582px;top:613px;width:18px;height:3px;background:#000"></div>
<div class="abs" style="left:605px;top:605px;border:4px solid transparent;border-top:4px solid #000;border-bottom:0;width:0;height:0"></div>
<svg class="ico" style="left:626px;top:599px" width="16" height="16" viewBox="0 0 16 16"><path d="M3,7l5,-5l6,5l-5,5.500z" fill="#fff" stroke="#000" stroke-width=".9"/><path d="M6,5c-1,-3 2,-5 3,-2" fill="none" stroke="#000"/><path d="M12,6c3,1 3,4 2,6c-1,-2 -2,-4 -2,-6z" fill="#0000c0"/></svg>
<div class="abs" style="left:624px;top:613px;width:19px;height:3px;background:#ffffb0"></div>
<div class="abs" style="left:648px;top:605px;border:4px solid transparent;border-top:4px solid #000;border-bottom:0;width:0;height:0"></div>
<svg class="ico" style="left:670px;top:599px" width="16" height="16" viewBox="0 0 16 16"><path d="M6,11l6,-9l2.500,1.500l-6,9l-3.500,1z" fill="#000080" stroke="#000" stroke-width=".6"/><path d="M12,2l1,-1.500l2,1.500l-1,1.500z" fill="#ffe000"/><path d="M0,12.500h5" stroke="#000080" stroke-width="1.500"/></svg>
<div class="abs" style="left:668px;top:613px;width:18px;height:3px;background:#000"></div>
<div class="abs" style="left:691px;top:605px;border:4px solid transparent;border-top:4px solid #000;border-bottom:0;width:0;height:0"></div>
<div class="abs" style="left:718px;top:603px;width:5px;height:5px;border-radius:3px;background:#000080"></div>
<div class="abs" style="left:710px;top:613px;width:20px;height:3px;background:#80e020"></div>
<div class="abs" style="left:734px;top:605px;border:4px solid transparent;border-top:4px solid #000;border-bottom:0;width:0;height:0"></div>
<div class="sep" style="left:755px;top:596px;height:27px"></div>

<div class="hline" style="left:4px;top:623px;width:1556px"></div>
<div class="abs" style="left:1331px;top:628px;width:22px;height:16px;border:1px solid;border-color:#aca899 #fff #fff #aca899;border-bottom:0"></div>
<div class="abs" style="left:1355px;top:628px;width:200px;height:16px;border:1px solid;border-color:#aca899 #fff #fff #aca899;border-bottom:0"></div>
<div class="t" style="left:1357px;top:630px;">-166129.688&nbsp; -29201.653 Метры</div>

</div>
<div id="dlg" class="abs" style="left:592px;top:135px;width:660px;height:463px">
<div id="dtitle" class="abs"><div class="t dcap">Свойства слоя</div><div class="abs tb tbh"><span>?</span></div><div class="abs tb tbx"><svg width="21" height="21" viewBox="0 0 21 21"><path d="M6,6l8.500,8.500M14.500,6l-8.500,8.500" stroke="#fff" stroke-width="1.900"/></svg></div></div>
<div id="dbody" class="abs"></div><div id="dbot" class="abs"></div>
<div class="abs" style="left:10px;top:56px;width:641px;height:368px;border:1px solid;border-color:#fff #716f64 #716f64 #fff;box-shadow:inset -1px -1px 0 #aca899"></div>
<div class="abs" style="left:11px;top:39px;width:47px;height:17px;border-top:1px solid #fff;border-right:1px solid #716f64;border-left:1px solid #fff;box-shadow:inset -1px 0 0 #aca899;border-radius:2px 2px 0 0"></div>
<div class="t" style="left:16px;top:42px;">Общие</div>
<div class="abs" style="left:58px;top:39px;width:60px;height:17px;border-top:1px solid #fff;border-right:1px solid #716f64;border-left:1px solid #fff;box-shadow:inset -1px 0 0 #aca899;border-radius:2px 2px 0 0"></div>
<div class="t" style="left:64px;top:42px;">Источник</div>
<div class="abs" style="left:118px;top:39px;width:53px;height:17px;border-top:1px solid #fff;border-right:1px solid #716f64;border-left:1px solid #fff;box-shadow:inset -1px 0 0 #aca899;border-radius:2px 2px 0 0"></div>
<div class="t" style="left:124px;top:42px;">Экстент</div>
<div class="abs" style="left:171px;top:39px;width:80px;height:17px;border-top:1px solid #fff;border-right:1px solid #716f64;border-left:1px solid #fff;box-shadow:inset -1px 0 0 #aca899;border-radius:2px 2px 0 0"></div>
<div class="t" style="left:176px;top:42px;">Отображение</div>
<div class="abs" style="left:313px;top:39px;width:114px;height:17px;border-top:1px solid #fff;border-right:1px solid #716f64;border-left:1px solid #fff;box-shadow:inset -1px 0 0 #aca899;border-radius:2px 2px 0 0"></div>
<div class="t" style="left:317px;top:42px;letter-spacing:-.13px">Соединения и Связи</div>
<div class="abs" style="left:250px;top:37px;width:63px;height:20px;background:#ece9d8;border-top:1px solid #fff;border-left:1px solid #fff;border-right:1px solid #716f64;box-shadow:inset -1px 0 0 #aca899;border-radius:2px 2px 0 0"></div>
<div class="t" style="left:258px;top:40px;">Символы</div>
<div class="t" style="left:12px;top:61px;letter-spacing:.2px">Показать:</div>
<div class="sunken2" style="left:13px;top:74px;width:129px;height:228px;"></div>
<div class="t" style="left:16px;top:77px;">Растяжка</div>
<div class="abs" style="left:15px;top:89px;width:125px;height:13px;background:#316ac5"></div>
<div class="t" style="left:16px;top:89px;color:#fff;letter-spacing:-.5px">RGB Composite</div>
<div class="abs" style="left:14px;top:308px;width:127px;height:88px;overflow:hidden"><svg width="128" height="88" viewBox="0 0 128 88" style="position:absolute;left:0;top:0">
<defs>
<filter id="tn" color-interpolation-filters="sRGB" x="0" y="0" width="100%" height="100%"><feTurbulence type="fractalNoise" baseFrequency=".16" numOctaves="3" seed="7" result="n"/>
<feColorMatrix in="n" type="matrix" values=".5 0 0 0 .30  -.85 0 0 0 .78  -.75 0 0 0 .80  0 0 0 0 1"/></filter>
<filter id="tn2" color-interpolation-filters="sRGB" x="0" y="0" width="100%" height="100%"><feTurbulence type="fractalNoise" baseFrequency=".3" numOctaves="2" seed="3" result="n"/>
<feColorMatrix in="n" type="matrix" values="0 0 0 0 .5  0 0 0 0 .62  0 0 0 0 .66  0 2.400 0 0 -1.100"/></filter>
<filter id="tb" x="-10%" y="-10%" width="120%" height="120%"><feGaussianBlur stdDeviation="1.200"/></filter>
<filter id="tb2" x="-10%" y="-10%" width="120%" height="120%"><feGaussianBlur stdDeviation=".6"/></filter>
</defs>
<rect width="128" height="88" fill="#a84a5c"/>
<rect width="128" height="88" filter="url(#tn)"/>
<g filter="url(#tb)" opacity=".8">
<path d="M56,8l10,-8h8l2,20l6,26l-14,4l-12,-20z" fill="#e8183c"/>
<path d="M78,0h38l-6,10l-14,6l-14,-4z" fill="#e01c40"/>
<path d="M108,22l20,-8v36l-16,-2l-6,-12z" fill="#e21c40"/>
<path d="M66,56l14,-2l2,10l-12,4z" fill="#e8183c"/>
<path d="M70,80l14,-4l14,6v6h-30z" fill="#e01c40"/>
<path d="M10,72l16,-4l2,14l-6,6h-14z" fill="#d82040"/>
<path d="M22,10l20,-6l8,14l-4,20l-14,4z" fill="#b84860" opacity=".7"/>
</g>
<rect width="128" height="88" filter="url(#tn2)" opacity=".6"/>
<g filter="url(#tb2)">
<path d="M0,0h13l9,16l7,18l10,16l4,6l-14,-3l-18,-6l-11,-5z" fill="#14363e"/>
<path d="M40,56l22,-3l2,5l-7,4l-5,10l6,10l3,6h-36l4,-12l7,-7l3,-9z" fill="#132f36"/>
<path d="M0,43l12,5l14,7l10,2l10,-3l16,-3l24,-1h42" stroke="#8ef0f0" stroke-width="2.400" fill="none"/>
<path d="M12,48l14,8l8,4" stroke="#a8f4f0" stroke-width="3" fill="none"/>
<path d="M70,0l3,14l4,14l10,16l2,10l-6,14l-8,12l-8,8" stroke="#7cc8cc" stroke-width="1.400" fill="none"/>
<path d="M38,0l4,12l6,8" stroke="#78b8c0" stroke-width="1.200" fill="none"/>
<path d="M88,52l10,-4l10,2l6,8l-8,8l-10,4l-8,-6z" fill="#70d8dc" opacity=".85"/>
<path d="M104,36l10,-2l4,8l-8,6l-6,-4z" fill="#80dce0" opacity=".7"/>
<path d="M56,10l8,-4l2,8l-6,6z" fill="#88c8d0" opacity=".7"/>
<path d="M62,60l8,-2l2,6l-8,4z" fill="#90dce0" opacity=".7"/>
<path d="M112,8l8,-2l2,8l-8,6z" fill="#88d0d8" opacity=".6"/>
<path d="M4,62l6,0l2,10l-6,4z" fill="#90d8dc" opacity=".6"/>
</g>
</svg></div>
<div class="abs" style="left:147px;top:69px;width:369px;height:19px;border:1px solid;border-color:#aca899 #fff #fff #aca899"></div>
<div class="t" style="left:149px;top:71px;font-weight:bold;letter-spacing:.3px">Отобразить растр в модели RGB</div>
<div class="btn" style="left:520px;top:68px;width:75px;height:21px;">Импорт...</div>
<div class="abs" style="left:148px;top:94px;width:448px;height:304px;border:1px solid;border-color:#aca899 #fff #fff #aca899"></div>
<div class="abs" style="left:577px;top:96px;width:18px;height:301px;background:#f4f3ee"></div>
<div class="abs" style="left:578px;top:96px;width:16px;height:17px;background:linear-gradient(90deg,#cbd9fb,#b9cbf7);border:1px solid #fff;border-radius:3px;box-shadow:inset 0 0 0 1px #b0c4f4"><svg width="14" height="15" viewBox="0 0 14 15"><path d="M3,9l4,-4l4,4" stroke="#4d6185" stroke-width="2" fill="none"/></svg></div>
<div class="abs" style="left:578px;top:380px;width:16px;height:17px;background:linear-gradient(90deg,#cbd9fb,#b9cbf7);border:1px solid #fff;border-radius:3px;box-shadow:inset 0 0 0 1px #b0c4f4"><svg width="14" height="15" viewBox="0 0 14 15"><path d="M3,5l4,4l4,-4" stroke="#4d6185" stroke-width="2" fill="none"/></svg></div>
<div class="abs" style="left:578px;top:113px;width:16px;height:115px;background:linear-gradient(90deg,#c9d7fc,#bccdfa 60%,#b3c5f5);border:1px solid #fff;border-radius:3px;box-shadow:inset 0 0 0 1px #a9bdf0"><div style="position:absolute;left:4px;top:51px;width:6px;height:7px;background:repeating-linear-gradient(180deg,#eef4fe 0,#eef4fe 1px,#8cb0f8 1px,#8cb0f8 2px)"></div></div>
<div class="abs" style="left:155px;top:102px;width:389px;height:96px;background:#fff"></div>
<div class="abs" style="left:155px;top:102px;width:386px;height:17px;background:#ece9d8;border:1px solid;border-color:#fff #aca899 #aca899 #fff;border-top-color:#aca899"></div>
<div class="abs" style="left:155px;top:103px;width:136px;height:15px;border-right:1px solid #aca899;box-shadow:1px 0 0 #fff"></div>
<div class="t" style="left:161px;top:106px;letter-spacing:-.35px">Channel</div>
<div class="t" style="left:296px;top:106px;">Band</div>
<div class="abs" style="left:155px;top:138px;width:386px;height:1px;background:#ece9d8"></div>
<div class="abs" style="left:160px;top:124px;width:13px;height:13px;border:1px solid #000;box-shadow:inset 0 0 0 1px #000;background:#fff"><svg width="11" height="11" viewBox="0 0 11 11" style="position:absolute;left:0;top:0"><path d="M2,5l2.500,2.500l4.500,-5" stroke="#000" stroke-width="2.100" fill="none"/></svg></div>
<div class="t" style="left:176px;top:125px;">Красный</div>
<div class="t" style="left:296px;top:125px;">Band_1</div>
<div class="ddb" style="left:525px;top:123px;width:15px;height:15px;"></div>
<div class="abs" style="left:155px;top:155px;width:386px;height:1px;background:#ece9d8"></div>
<div class="abs" style="left:160px;top:141px;width:13px;height:13px;border:1px solid #000;box-shadow:inset 0 0 0 1px #000;background:#fff"><svg width="11" height="11" viewBox="0 0 11 11" style="position:absolute;left:0;top:0"><path d="M2,5l2.500,2.500l4.500,-5" stroke="#000" stroke-width="2.100" fill="none"/></svg></div>
<div class="t" style="left:176px;top:142px;">Зеленый</div>
<div class="t" style="left:296px;top:142px;">Band_2</div>
<div class="ddb" style="left:525px;top:140px;width:15px;height:15px;"></div>
<div class="abs" style="left:155px;top:172px;width:386px;height:1px;background:#ece9d8"></div>
<div class="abs" style="left:160px;top:158px;width:13px;height:13px;border:1px solid #000;box-shadow:inset 0 0 0 1px #000;background:#fff"><svg width="11" height="11" viewBox="0 0 11 11" style="position:absolute;left:0;top:0"><path d="M2,5l2.500,2.500l4.500,-5" stroke="#000" stroke-width="2.100" fill="none"/></svg></div>
<div class="t" style="left:176px;top:159px;">Синий</div>
<div class="t" style="left:296px;top:159px;">Band_3</div>
<div class="ddb" style="left:525px;top:157px;width:15px;height:15px;"></div>
<div class="abs" style="left:155px;top:189px;width:386px;height:1px;background:#ece9d8"></div>
<div class="abs" style="left:160px;top:175px;width:13px;height:13px;border:1px solid #000;box-shadow:inset 0 0 0 1px #000;background:#fff"></div>
<div class="t" style="left:176px;top:176px;">Alpha</div>
<div class="ddb" style="left:525px;top:174px;width:15px;height:15px;"></div>
<div class="abs" style="left:290px;top:119px;width:1px;height:79px;background:#ece9d8"></div>
<div class="chk" style="left:168px;top:210px;width:13px;height:13px;"></div>
<div class="t" style="left:185px;top:210px;">Показать значение фона (R, G, B)</div>
<div class="sunken2" style="left:371px;top:205px;width:38px;height:19px;background:#ece9d8;text-align:right;padding-right:7px;line-height:17px;color:#aca899;border-color:#8c8a7c #fff #fff #8c8a7c">0</div>
<div class="sunken2" style="left:411px;top:205px;width:38px;height:19px;background:#ece9d8;text-align:right;padding-right:7px;line-height:17px;color:#aca899;border-color:#8c8a7c #fff #fff #8c8a7c">0</div>
<div class="sunken2" style="left:451px;top:205px;width:38px;height:19px;background:#ece9d8;text-align:right;padding-right:7px;line-height:17px;color:#aca899;border-color:#8c8a7c #fff #fff #8c8a7c">0</div>
<div class="t" style="left:490px;top:208px;">как</div>
<div class="btn" style="left:510px;top:203px;width:38px;height:21px;"></div>
<div class="abs" style="left:536px;top:206px;width:1px;height:16px;background:#aca899"></div>
<div class="abs" style="left:539px;top:212px;border:3px solid transparent;border-top:3px solid #000;border-bottom:0;width:0;height:0"></div>
<div class="t" style="left:-592px;top:234px;left:auto;right:153px">Отображать значение</div>
<div class="t" style="left:-592px;top:247px;letter-spacing:-.13px;left:auto;right:153px">Нет данных символом</div>
<div class="btn" style="left:510px;top:236px;width:38px;height:21px;"></div>
<div class="abs" style="left:536px;top:239px;width:1px;height:16px;background:#aca899"></div>
<div class="abs" style="left:539px;top:245px;border:3px solid transparent;border-top:3px solid #000;border-bottom:0;width:0;height:0"></div>
<div class="abs" style="left:157px;top:264px;width:389px;height:140px;border:1px solid #d0d0bf;border-radius:3px;border-bottom:0;height:133px;border-bottom-left-radius:0;border-bottom-right-radius:0"></div>
<div class="t" style="left:165px;top:258px;background:#ece9d8;padding:0 2px;left:163px">Растяжка</div>
<div class="t" style="left:175px;top:280px;">Тип:</div>
<div class="sunken2" style="left:231px;top:276px;width:199px;height:19px;"></div>
<div class="abs" style="left:234px;top:279px;width:177px;height:13px;background:#316ac5"></div>
<div class="t" style="left:235px;top:280px;color:#fff;letter-spacing:.17px">Ср. кв. отклонение</div>
<div class="ddb" style="left:412px;top:278px;width:16px;height:15px;"></div>
<div class="btn" style="left:433px;top:275px;width:112px;height:21px;color:#aca899;text-shadow:1px 1px 0 #fff">Гистограммы...</div>
<div class="t" style="left:233px;top:305px;">n:</div>
<div class="sunken2" style="left:250px;top:302px;width:41px;height:19px;text-align:right;padding-right:5px;line-height:16px">2</div>
<div class="chk" style="left:439px;top:308px;width:13px;height:13px;"></div>
<div class="t" style="left:455px;top:308px;">Инвертировать</div>
<div class="chk" style="left:174px;top:338px;width:13px;height:13px;"></div>
<div class="t" style="left:191px;top:338px;">Применить растяжку:</div>
<div class="sunken2" style="left:381px;top:334px;width:27px;height:19px;background:#ece9d8;text-align:right;padding-right:7px;line-height:17px;color:#aca899;border-color:#8c8a7c #fff #fff #8c8a7c">1</div>
<div class="sunken2" style="left:414px;top:334px;width:27px;height:19px;background:#ece9d8;text-align:right;padding-right:7px;line-height:17px;color:#aca899;border-color:#8c8a7c #fff #fff #8c8a7c">1</div>
<div class="sunken2" style="left:444px;top:334px;width:27px;height:19px;background:#ece9d8;text-align:right;padding-right:7px;line-height:17px;color:#aca899;border-color:#8c8a7c #fff #fff #8c8a7c">1</div>
<div class="abs" style="left:175px;top:374px;width:341px;height:30px;border:1px solid #d0d0bf;border-radius:3px 3px 0 0;border-bottom:0;height:23px"></div>
<div class="t" style="left:183px;top:368px;letter-spacing:.22px;background:#ece9d8;padding:0 2px;left:181px">Статистика :</div>
<div class="abs" style="left:292px;top:362px;width:190px;height:24px;background:#ece9d8"></div>
<div class="sunken2" style="left:294px;top:364px;width:185px;height:20px;"></div>
<div class="t" style="left:297px;top:368px;width:163px;overflow:hidden">из каждого набора растровых д</div>
<div class="ddb" style="left:461px;top:366px;width:16px;height:16px;"></div>
<div class="btn" style="left:412px;top:431px;width:75px;height:23px;border:1px solid #000;box-shadow:inset -1px -1px 0 #716f64, inset 1px 1px 0 #fff, inset -2px -2px 0 #aca899;line-height:20px">OK</div>
<div class="btn" style="left:494px;top:432px;width:75px;height:21px;line-height:18px">Отмена</div>
<div class="btn" style="left:576px;top:432px;width:75px;height:21px;line-height:18px">Применить</div>
</div>

<svg class="abs" style="left:480px;top:415px" width="340" height="45" viewBox="0 0 340 45"><path d="M5,38.500L334,7" stroke="#000" stroke-width="1.150" fill="none"/></svg>

</body>
</html>
